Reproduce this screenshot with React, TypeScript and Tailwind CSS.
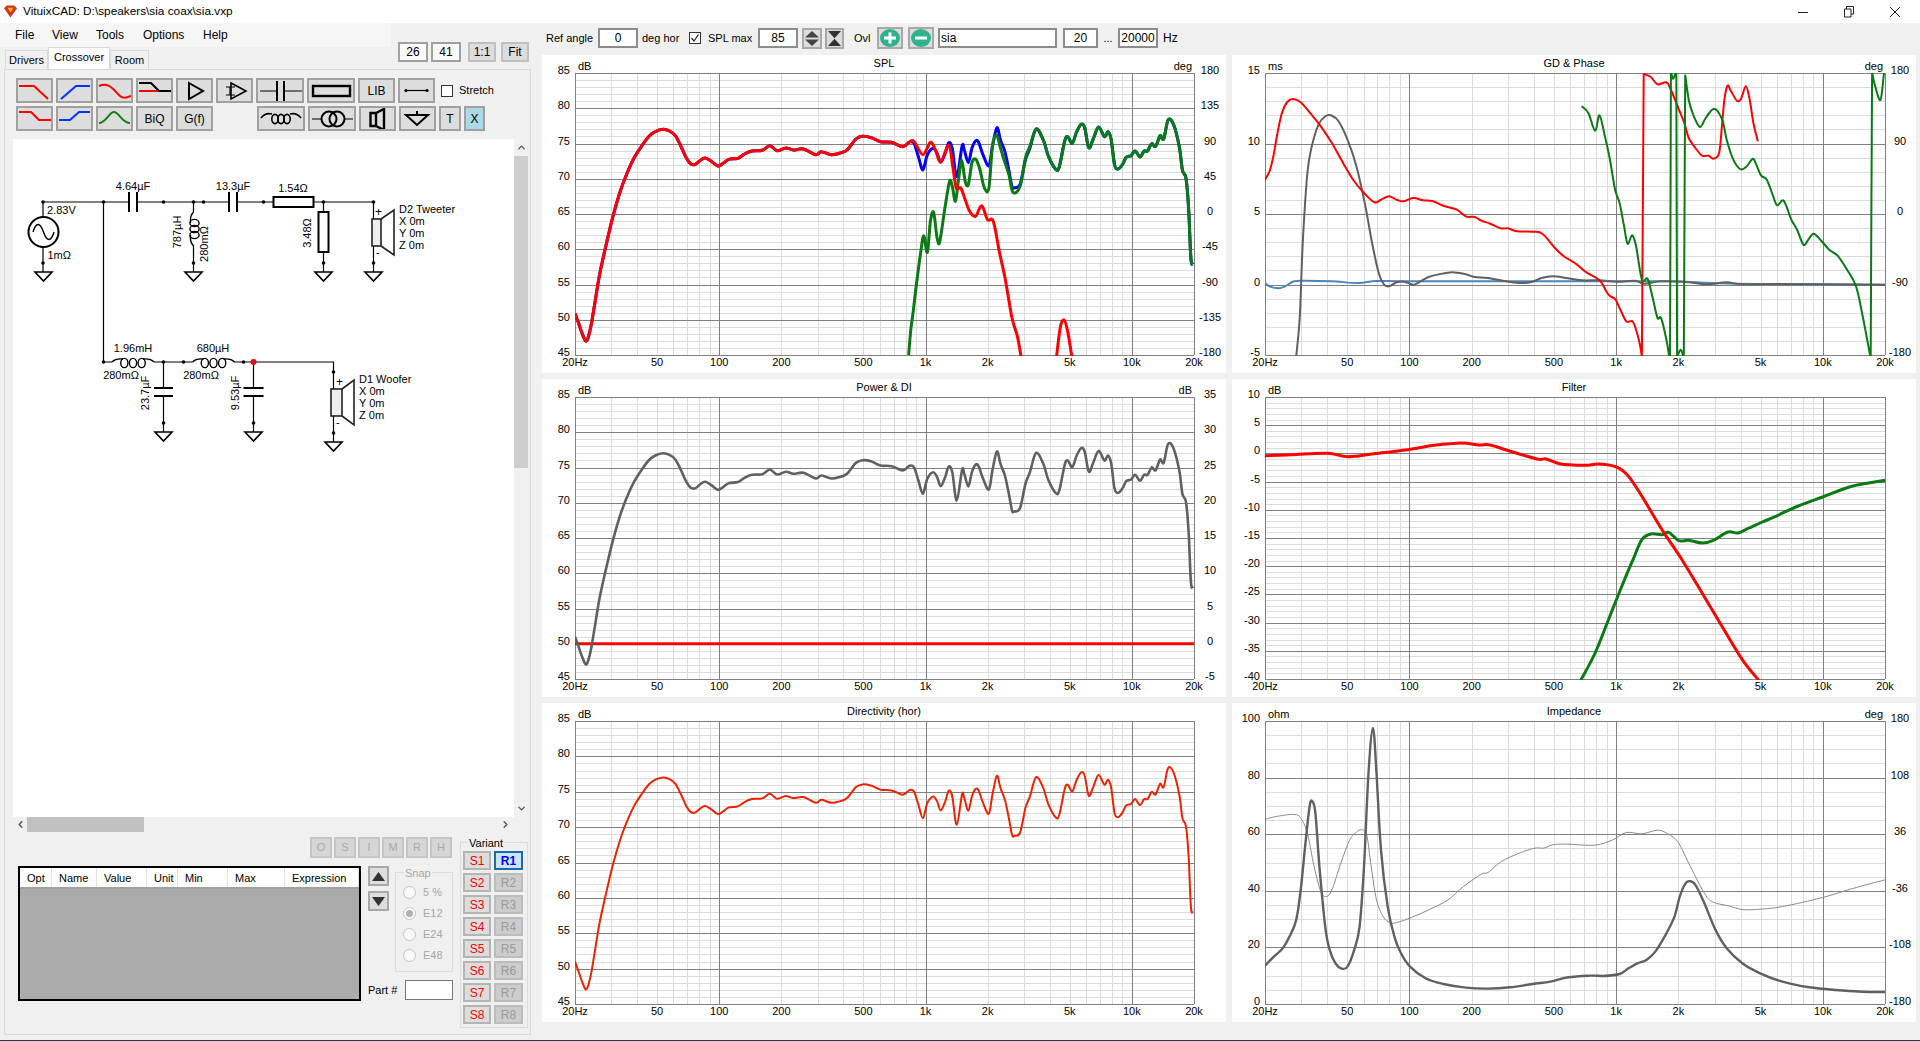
import { Fragment } from "react";
import type { ReactNode } from "react";
import { ChevronDown, ChevronLeft, ChevronRight, ChevronUp } from "lucide-react";

type Pt = number[];

const p = (s: string): Pt[] =>
  s
    .trim()
    .split(/\s+/)
    .map((v) => v.split(",").map(Number));

// curve points are read off the reference, in crop coordinates
const RESPONSE = p(`100,785 108,815 116,845 124,868 130,855 137,815 145,750 155,670 168,590 185,495 200,425 215,370 232,320 250,282 265,255 280,240 297,233 312,238 325,252 338,285 350,320 360,337 370,338 382,325 392,319 405,328 420,343 432,335 445,323 465,320 480,307 497,298 520,296 537,282 553,297 573,289 590,295 612,292 640,309 652,300 675,309 695,304 710,295 730,262 745,254 765,258 785,270 810,272 835,285 850,271 860,275 870,315 880,355 890,310 903,290 912,305 920,332 930,305 938,273 946,290 956,375 968,283 973,295 982,333 990,290 998,268 1005,272 1015,310 1028,342 1036,285 1046,228 1054,265 1064,300 1072,350 1080,405 1085,408 1098,398 1110,325 1120,290 1134,232 1150,265 1162,315 1178,353 1186,345 1198,268 1205,255 1215,275 1225,240 1235,218 1243,228 1252,288 1262,262 1274,226 1287,255 1295,240 1302,262 1310,340 1318,352 1328,338 1336,317 1347,312 1356,298 1367,316 1376,298 1384,298 1393,276 1402,284 1412,252 1420,262 1430,205 1442,218 1455,285 1462,355 1470,380 1476,470 1481,620 1486,638`);

const RESP_BOX = [100, 64, 1488, 912];
const shift = (pts: Pt[], dy: number) => pts.map(([x, y]) => [x, y + dy]);

const SPL_TOTAL = shift(RESPONSE, 156);
const SPL_GREEN = [
  ...p(`848,1066 853,990 858,940 866,850 875,760 882,708 890,758 897,665 904,638 912,715 918,725 930,620 940,545 946,560 953,605 960,540 967,482 975,545 982,555 990,490 998,478 1007,505 1018,565 1028,565 1036,440 1045,405 1053,440 1062,480 1073,525 1082,578 1098,560 1110,475 1120,440`),
  ...SPL_TOTAL.filter(([x]) => x >= 1134),
];
const SPL_RED = [
  ...SPL_TOTAL.filter(([x]) => x <= 850),
  ...p(`860,425 880,465 897,428 908,450 920,487 938,437 947,500 955,565 965,565 975,600 985,635 998,650 1012,618 1025,660 1038,665 1052,760 1065,840 1080,955 1092,1010 1100,1070`),
];
const SPL_RED_2 = p(`1180,1070 1188,985 1196,960 1204,990 1214,1070`);

const GD_RED = p(`100,540 110,515 118,475 128,400 138,340 150,307 163,298 180,308 200,338 225,380 250,430 275,490 300,545 322,580 345,608 360,600 378,590 395,600 410,605 432,595 455,602 475,604 500,618 530,630 550,650 570,652 585,663 605,672 628,686 645,686 665,695 700,696 722,702 750,745 770,770 795,790 820,818 850,842 870,885 885,898 895,925 910,965 925,967 938,1020 945,1070`);
const GD_RED_2 = p(`949,222 965,232 980,254 1000,248 1010,270 1025,320 1040,370 1050,415 1065,445 1080,468 1095,468 1105,477 1118,460 1125,370 1130,300 1137,258 1145,275 1158,303 1167,298 1178,260 1186,295 1195,370 1205,425`);
const GD_GRAY = p(`170,1070 178,950 185,720 195,520 205,440 220,375 235,350 248,347 265,365 285,420 305,500 325,620 340,730 355,820 367,855 378,860 395,848 412,846 432,855 445,848 465,833 490,824 520,818 550,824 570,832 600,835 640,845 670,850 695,848 720,835 745,830 775,835 810,842 850,842 890,846 930,843 950,852 985,845 1040,846 1090,854 1135,848 1170,854 1250,853 1490,855`);
const GD_BLUE = p(`100,850 110,860 130,866 145,860 165,845 190,843 250,845 310,850 350,844 420,845 600,845 800,845 1000,845 1100,850 1200,853 1490,855`);
const GD_GREEN = [
  p(`810,320 825,340 840,393 850,347 862,410 872,470 885,570 895,610 905,680 913,732 923,707 932,740 945,840 958,838 970,900 980,955 988,955 1000,1020 1006,1070`),
  p(`1008,1070 1010,215`),
  p(`1010,215 1015,238 1021,215`),
  p(`1022,215 1024,1070`),
  p(`1026,1066 1032,1050 1038,1070`),
  p(`1039,1070 1042,225`),
  p(`1042,225 1050,300 1060,345 1075,382 1088,355 1107,327 1125,360 1135,420 1150,480 1165,508 1178,503 1193,478 1200,490 1212,527 1225,540 1238,585 1248,617 1263,603 1280,660 1293,690 1307,735 1318,720 1330,702 1345,720 1365,750 1385,770 1405,810 1425,860 1440,950 1457,1070`),
  p(`1458,1070 1461,215`),
  p(`1461,220 1468,260 1480,300 1488,215`),
];

const FILTER_RED = p(`100,258 160,255 240,251 285,261 340,253 420,240 480,227 540,220 580,226 605,226 650,245 710,268 730,268 760,282 790,286 820,287 850,283 890,293 915,320 945,380 990,480 1030,560 1080,670 1120,760 1170,870 1207,932`);
const FILTER_GREEN = p(`808,932 840,850 870,750 900,650 925,570 945,510 965,493 990,495 1005,488 1028,513 1050,512 1080,520 1105,512 1138,487 1160,490 1185,475 1215,457 1250,437 1290,412 1350,382 1410,352 1450,341 1490,332`);

const IMP_DARK = p(`100,797 120,770 140,745 155,710 170,660 180,570 190,440 200,320 206,305 213,340 222,500 235,680 245,750 258,790 272,806 285,800 300,750 312,680 322,500 332,220 342,85 350,220 360,450 375,620 390,710 405,760 425,800 460,835 500,852 550,863 600,866 650,862 700,852 740,845 780,832 830,827 860,828 895,822 915,805 935,790 955,780 975,755 1000,700 1018,650 1030,590 1042,552 1053,544 1065,555 1085,610 1110,690 1135,745 1170,790 1210,820 1260,845 1320,862 1380,870 1440,875 1490,876`);
const IMP_THIN = p(`100,358 130,349 165,344 180,355 195,400 210,500 225,575 237,590 250,570 270,490 290,420 305,397 316,390 328,405 338,500 350,600 365,650 380,668 395,668 430,652 470,628 510,600 545,560 585,523 600,518 630,485 670,460 705,445 725,445 745,435 775,433 840,436 880,420 910,398 945,402 980,391 1000,400 1025,425 1050,490 1085,580 1105,607 1140,618 1170,629 1210,628 1260,620 1350,593 1420,565 1490,540`);

const FREQS = [
  20, 30, 40, 50, 60, 70, 80, 90, 100, 200, 300, 400, 500, 600, 700, 800, 900, 1000, 2000, 3000,
  4000, 5000, 6000, 7000, 8000, 9000, 10000, 20000,
];
const FREQ_LABELS: [number, string][] = [
  [20, "20Hz"],
  [50, "50"],
  [100, "100"],
  [200, "200"],
  [500, "500"],
  [1000, "1k"],
  [2000, "2k"],
  [5000, "5k"],
  [10000, "10k"],
  [20000, "20k"],
];

function smooth(pts: Pt[]) {
  let d = `M${pts[0][0].toFixed(1)} ${pts[0][1].toFixed(1)}`;
  for (let i = 0; i < pts.length - 1; i++) {
    const a = pts[Math.max(i - 1, 0)];
    const b = pts[i];
    const c = pts[i + 1];
    const e = pts[Math.min(i + 2, pts.length - 1)];
    const c1 = [b[0] + (c[0] - a[0]) / 6, b[1] + (c[1] - a[1]) / 6];
    const c2 = [c[0] - (e[0] - b[0]) / 6, c[1] - (e[1] - b[1]) / 6];
    d += `C${c1[0].toFixed(1)} ${c1[1].toFixed(1)} ${c2[0].toFixed(1)} ${c2[1].toFixed(1)} ${c[0].toFixed(1)} ${c[1].toFixed(1)}`;
  }
  return d;
}

type Curve = { segs: Pt[][]; color: string; w: number; box: number[] };

type ChartProps = {
  title: string;
  left: string[];
  right?: string[];
  unitL: string;
  unitR?: string;
  minor: number;
  x1: number;
  y0?: number;
  y1?: number;
  h?: number;
  curves: Curve[];
  rightX?: number;
};

function Chart({ title, left, right, unitL, unitR, minor, x1, y0 = 18, y1 = 300, h = 318, curves, rightX = 668 }: ChartProps) {
  const x0 = 33;
  const id = "clip" + title.replace(/[^a-zA-Z]/g, "");
  const fx = (f: number) => x0 + ((x1 - x0) * Math.log10(f / 20)) / 3;
  const divs = left.length - 1;
  const fy = (i: number) => y0 + ((y1 - y0) * i) / divs;
  const minors: number[] = [];
  for (let i = 0; i < divs; i++) for (let j = 1; j < minor; j++) minors.push(fy(i + j / minor));
  const crisp = (v: number) => Math.round(v) + 0.5;
  return (
    <div className="bg-white">
      <svg width={684} height={h} viewBox={`0 0 684 ${h}`} className="block text-[11px]">
        <defs>
          <clipPath id={id}>
            <rect x={x0} y={y0} width={x1 - x0 + 1} height={y1 - y0 + 1} />
          </clipPath>
        </defs>
        <g shapeRendering="crispEdges" strokeWidth={1}>
          {minors.map((y) => (
            <line key={y} x1={x0} x2={x1} y1={crisp(y)} y2={crisp(y)} stroke="#dcdcdc" />
          ))}
          {FREQS.map((f) => (
            <line key={f} x1={crisp(fx(f))} x2={crisp(fx(f))} y1={y0} y2={y1} stroke="#dcdcdc" />
          ))}
          {left.map((_, i) => (
            <line key={i} x1={x0} x2={x1} y1={crisp(fy(i))} y2={crisp(fy(i))} stroke="#808080" />
          ))}
          {[20, 100, 1000, 10000, 20000].map((f) => (
            <line key={f} x1={crisp(fx(f))} x2={crisp(fx(f))} y1={y0} y2={y1} stroke="#808080" />
          ))}
        </g>
        <g clipPath={`url(#${id})`} fill="none" strokeLinejoin="round">
          {curves.map((c, i) => {
            const sx = (x1 - x0) / (c.box[2] - c.box[0]);
            const sy = (y1 - y0) / (c.box[3] - c.box[1]);
            const d = c.segs
              .map((s) => smooth(s.map(([x, y]) => [x0 + (x - c.box[0]) * sx, y0 + (y - c.box[1]) * sy])))
              .join("");
            return <path key={i} d={d} stroke={c.color} strokeWidth={c.w} />;
          })}
        </g>
        <text x={342} y={11.5} textAnchor="middle">
          {title}
        </text>
        <text x={36} y={15}>
          {unitL}
        </text>
        {unitR && (
          <text x={x1 - 2} y={15} textAnchor="end">
            {unitR}
          </text>
        )}
        {left.map((t, i) => (
          <text key={i} x={28} y={fy(i) + 1} textAnchor="end">
            {t}
          </text>
        ))}
        {right?.map((t, i) => (
          <text key={i} x={rightX} y={fy(i) + 1} textAnchor="middle">
            {t}
          </text>
        ))}
        {FREQ_LABELS.map(([f, t]) => (
          <text key={f} x={fx(f)} y={y1 + 11} textAnchor="middle">
            {t}
          </text>
        ))}
      </svg>
    </div>
  );
}

function ToolBtn({ w = "w-[37px]", children, blue }: { w?: string; children: ReactNode; blue?: boolean }) {
  return (
    <div
      className={`${w} flex h-[25px] items-center justify-center border-2 border-[#a0a0a0] text-[12px] ${
        blue ? "bg-[#add8e6]" : "bg-[#dddddd]"
      }`}
    >
      {children}
    </div>
  );
}

function BtnIcon({ w = 37, children }: { w?: number; children: ReactNode }) {
  return (
    <svg width={w - 4} height={21} viewBox={`2 2 ${w - 4} 21`} fill="none" stroke="black" strokeWidth={2}>
      {children}
    </svg>
  );
}

function Coil({ x, y, len, vertical }: { x: number; y: number; len: number; vertical?: boolean }) {
  const step = (len - 16) / 3;
  const tr = vertical ? `translate(${x} ${y}) rotate(90)` : `translate(${x} ${y})`;
  const flip = vertical ? 1 : -1;
  return (
    <g transform={tr} fill="none" stroke="black" strokeWidth={1.4}>
      <path d={`M0 0C3 ${flip * 3} 6 ${flip * 3.5} 11 ${flip * 3}`} />
      <path d={`M${len} 0C${len - 3} ${flip * 3} ${len - 6} ${flip * 3.5} ${len - 11} ${flip * 3}`} />
      {[0, 1, 2].map((i) => (
        <ellipse key={i} cx={8 + step * (i + 0.5)} cy={-flip * 1} rx={3.6} ry={4.6} />
      ))}
    </g>
  );
}

function Ground({ x, y }: { x: number; y: number }) {
  return <path d={`M${x - 8.5} ${y}H${x + 8.5}L${x} ${y + 9}Z`} fill="none" stroke="black" strokeWidth={1.6} />;
}

function Speaker({ x, y, w, h, cone, coneTop }: { x: number; y: number; w: number; h: number; cone: number; coneTop: number }) {
  return (
    <g fill="none" stroke="#222" strokeWidth={1.6}>
      <rect x={x} y={y} width={w} height={h} fill="#efefef" />
      <path d={`M${x + w} ${y}L${x + w + cone} ${y - coneTop}V${y + h + coneTop}L${x + w} ${y + h}`} />
    </g>
  );
}

function VText({ x, y, children }: { x: number; y: number; children: ReactNode }) {
  return (
    <text transform={`translate(${x} ${y}) rotate(-90)`} textAnchor="middle" dominantBaseline="middle">
      {children}
    </text>
  );
}

function Schematic() {
  const dots = [
    [43, 202],
    [103.5, 202],
    [163.5, 202],
    [193.5, 202],
    [203.5, 202],
    [263.5, 202],
    [323.5, 202],
    [373.5, 202],
    [43, 263],
    [193.5, 263],
    [323.5, 263],
    [373.5, 263],
    [103.5, 362],
    [163.5, 362],
    [183.5, 362],
    [243.5, 362],
    [163.5, 423],
    [253.5, 423],
    [333.5, 372],
    [333.5, 433],
  ];
  return (
    <svg width={500} height={678} viewBox="13 139 500 678" className="block text-[11px]">
      <g stroke="black" strokeWidth={1.2} fill="none">
        <path d="M43 202H129M137 202H229M237 202H273M313 202H373.5V219M43 202V217M43 247V272M103.5 202V362H112M154 362H192.5M234 362H333.5V389M193.5 202V212M193.5 245V272M323.5 202V212M323.5 252V272M373.5 246V272M333.5 416V442M163.5 362V388M163.5 396V432M253.5 362V388M253.5 396V432" />
      </g>
      <g stroke="black" strokeWidth={2} fill="none">
        <path d="M129 192V212M137 192V212M229 192V212M237 192V212M154 388H173M154 396H173M243.5 388H263.5M243.5 396H263.5" />
        <rect x={273.5} y={197} width={40} height={10} />
        <rect x={318.5} y={212} width={10} height={40} />
        <circle cx={43.5} cy={232} r={15} />
        <path d="M33 232C36 222 40 222 43.5 232S51 242 54 232" strokeWidth={1.4} />
      </g>
      <Coil x={112} y={362} len={42} />
      <Coil x={192.5} y={362} len={42} />
      <Coil x={193.5} y={212} len={34} vertical />
      <Ground x={43.5} y={272} />
      <Ground x={193.5} y={272} />
      <Ground x={323.5} y={272} />
      <Ground x={373.5} y={272} />
      <Ground x={163.5} y={432} />
      <Ground x={253.5} y={432} />
      <Ground x={333.5} y={442} />
      <Speaker x={372} y={219} w={9} h={27} cone={13} coneTop={9} />
      <Speaker x={331} y={389} w={11} h={27} cone={12} coneTop={9} />
      {dots.map(([x, y]) => (
        <circle key={`${x}-${y}`} cx={x} cy={y} r={1.8} fill="black" />
      ))}
      <circle cx={253.5} cy={362} r={3} fill="#e01010" />
      <text x={47} y={214}>2.83V</text>
      <text x={47.5} y={259}>1mΩ</text>
      <text x={133} y={190} textAnchor="middle">4.64µF</text>
      <text x={233} y={190} textAnchor="middle">13.3µF</text>
      <text x={293} y={192} textAnchor="middle">1.54Ω</text>
      <text x={133} y={352} textAnchor="middle">1.96mH</text>
      <text x={121} y={379} textAnchor="middle">280mΩ</text>
      <text x={213} y={352} textAnchor="middle">680µH</text>
      <text x={201} y={379} textAnchor="middle">280mΩ</text>
      <VText x={178} y={232}>787µH</VText>
      <VText x={205} y={244}>280mΩ</VText>
      <VText x={308} y={233}>3.48Ω</VText>
      <VText x={146} y={393}>23.7µF</VText>
      <VText x={236} y={393}>9.53µF</VText>
      <text x={375} y={216} className="text-[12px]">+</text>
      <text x={376} y={256}>-</text>
      <text x={336} y={386} className="text-[12px]">+</text>
      <text x={336} y={426}>-</text>
      <text x={399} y={213}>D2 Tweeter</text>
      <text x={399} y={225}>X 0m</text>
      <text x={399} y={237}>Y 0m</text>
      <text x={399} y={249}>Z 0m</text>
      <text x={359} y={383}>D1 Woofer</text>
      <text x={359} y={395}>X 0m</text>
      <text x={359} y={407}>Y 0m</text>
      <text x={359} y={419}>Z 0m</text>
    </svg>
  );
}

function Field({ w, children, left }: { w: string; children?: ReactNode; left?: boolean }) {
  return (
    <div
      className={`${w} flex h-[20px] items-center border-2 border-[#8c8c8c] bg-white text-[12px] ${
        left ? "pl-[1px] text-[11px]" : "justify-center"
      }`}
    >
      {children}
    </div>
  );
}

function TopToolbar() {
  return (
    <div className="flex h-[32px] items-center pb-[2px] pl-[4px] text-[11px]">
      <span className="w-[52px]">Ref angle</span>
      <Field w="w-[40px]">0</Field>
      <span className="ml-[4px] w-[47px]">deg hor</span>
      <div className="flex h-[12px] w-[12px] items-center justify-center border border-[#333] bg-white">
        <svg width={10} height={10} viewBox="0 0 10 10" fill="none" stroke="#222" strokeWidth={1.2}>
          <path d="M1.5 5L4 8L8.5 1.5" />
        </svg>
      </div>
      <span className="ml-[7px] w-[50px]">SPL max</span>
      <Field w="w-[40px]">85</Field>
      <div className="ml-[4px] flex h-[21px] w-[20px] items-center justify-center border-2 border-[#a8a8a8] bg-[#dddddd]">
        <svg width={14} height={15} viewBox="0 0 14 15" fill="#444">
          <path d="M7 0L14 6.5H0ZM0 8.5H14L7 15Z" />
        </svg>
      </div>
      <div className="ml-[3px] flex h-[21px] w-[19px] items-center justify-center border-2 border-[#a8a8a8] bg-[#dddddd]">
        <svg width={13} height={15} viewBox="0 0 13 15" fill="#333">
          <path d="M0 0H13L6.5 7.2ZM6.5 7.8L13 15H0Z" />
        </svg>
      </div>
      <span className="ml-[10px] w-[23px]">Ovl</span>
      <div className="flex h-[22px] w-[26px] items-center justify-center border-2 border-[#a8a8a8] bg-[#dddddd]">
        <svg width={20} height={18} viewBox="0 0 20 18">
          <ellipse cx={10} cy={9} rx={10} ry={9} fill="#2fb28e" />
          <path d="M4 9H16M10 3.5V14.5" stroke="white" strokeWidth={3} />
        </svg>
      </div>
      <div className="ml-[5px] flex h-[22px] w-[26px] items-center justify-center border-2 border-[#a8a8a8] bg-[#dddddd]">
        <svg width={20} height={18} viewBox="0 0 20 18">
          <ellipse cx={10} cy={9} rx={10} ry={9} fill="#2fb28e" />
          <path d="M4 9H16" stroke="white" strokeWidth={3} />
        </svg>
      </div>
      <div className="ml-[4px]">
        <Field w="w-[119px]" left>
          sia
        </Field>
      </div>
      <div className="ml-[6px]">
        <Field w="w-[35px]">20</Field>
      </div>
      <span className="w-[20px] text-center">...</span>
      <Field w="w-[40px]">20000</Field>
      <span className="ml-[5px] text-[12px]">Hz</span>
    </div>
  );
}

function CrossoverTools() {
  return (
    <div className="flex flex-col gap-[3px] pl-[11px] pt-[8px]">
      <div className="flex items-center gap-[3px]">
        <ToolBtn>
          <BtnIcon>
            <path d="M3 8H18L32 21" stroke="#ff0000" />
          </BtnIcon>
        </ToolBtn>
        <ToolBtn>
          <BtnIcon>
            <path d="M5 21L20 8H34" stroke="#0033ff" />
          </BtnIcon>
        </ToolBtn>
        <ToolBtn>
          <BtnIcon>
            <path d="M3 8C12 4 16 10 22 16C26 21 30 20 35 18" stroke="#ff0000" />
          </BtnIcon>
        </ToolBtn>
        <ToolBtn>
          <BtnIcon>
            <path d="M3 5H15L23 13H35" />
            <path d="M3 13H22" stroke="#ff0000" />
          </BtnIcon>
        </ToolBtn>
        <ToolBtn>
          <BtnIcon>
            <path d="M13 5L27 13L13 21Z" />
          </BtnIcon>
        </ToolBtn>
        <ToolBtn>
          <BtnIcon>
            <path d="M15 5L30 13L15 21Z" strokeWidth={1.6} />
            <path d="M10 9H19M10 17H19M14 9V17" strokeWidth={1.2} />
          </BtnIcon>
        </ToolBtn>
        <ToolBtn w="w-[48px]">
          <BtnIcon w={48}>
            <path d="M4 13H21M28 13H46" strokeWidth={1.2} />
            <path d="M21 3V23M28 3V23" />
          </BtnIcon>
        </ToolBtn>
        <ToolBtn w="w-[48px]">
          <BtnIcon w={48}>
            <rect x={6} y={8} width={37} height={10} strokeWidth={2.4} />
          </BtnIcon>
        </ToolBtn>
        <ToolBtn>LIB</ToolBtn>
        <ToolBtn>
          <BtnIcon>
            <path d="M8 12.5H29" strokeWidth={1.2} />
            <circle cx={8} cy={12.5} r={1.6} fill="black" stroke="none" />
            <circle cx={29} cy={12.5} r={1.6} fill="black" stroke="none" />
          </BtnIcon>
        </ToolBtn>
        <div className="ml-[3px] h-[12px] w-[12px] border border-[#333] bg-white" />
        <span className="ml-[3px] text-[11px]">Stretch</span>
      </div>
      <div className="flex items-center gap-[3px]">
        <ToolBtn>
          <BtnIcon>
            <path d="M3 6H15L23 14H35" stroke="#ff0000" />
          </BtnIcon>
        </ToolBtn>
        <ToolBtn>
          <BtnIcon>
            <path d="M3 14H14L23 6H34" stroke="#0033ff" />
          </BtnIcon>
        </ToolBtn>
        <ToolBtn>
          <BtnIcon>
            <path d="M3 17C10 17 13 6 18 6C23 6 26 17 34 17" stroke="#118011" />
          </BtnIcon>
        </ToolBtn>
        <ToolBtn>BiQ</ToolBtn>
        <ToolBtn>G(f)</ToolBtn>
        <div className="w-[38px]" />
        <ToolBtn w="w-[48px]">
          <BtnIcon w={48}>
            <path d="M4 12C7 8 11 7 15 8M44 12C41 8 37 7 33 8" strokeWidth={1.6} />
            <ellipse cx={18} cy={13} rx={3.2} ry={4.6} strokeWidth={1.6} />
            <ellipse cx={24} cy={13} rx={3.2} ry={4.6} strokeWidth={1.6} />
            <ellipse cx={30} cy={13} rx={3.2} ry={4.6} strokeWidth={1.6} />
          </BtnIcon>
        </ToolBtn>
        <ToolBtn w="w-[48px]">
          <BtnIcon w={48}>
            <path d="M4 13H14M37 13H45" strokeWidth={1.2} />
            <circle cx={21} cy={13} r={7.5} />
            <circle cx={29} cy={13} r={7.5} />
          </BtnIcon>
        </ToolBtn>
        <ToolBtn>
          <BtnIcon>
            <path d="M11.5 7H17V20H11.5ZM17 7L25 3V24L17 20" strokeWidth={2.4} />
          </BtnIcon>
        </ToolBtn>
        <ToolBtn>
          <BtnIcon>
            <path d="M18 5V9M7 9H29L18 19Z" strokeWidth={2} />
          </BtnIcon>
        </ToolBtn>
        <ToolBtn w="w-[22px]">T</ToolBtn>
        <ToolBtn w="w-[21px]" blue>
          X
        </ToolBtn>
      </div>
    </div>
  );
}

function CanvasArea() {
  return (
    <div className="ml-[8px] mt-[8px] w-[515px]">
      <div className="flex">
        <div className="h-[678px] w-[501px] bg-white">
          <Schematic />
        </div>
        <div className="flex w-[14px] flex-col items-center">
          <div className="flex h-[17px] w-full items-center justify-center">
            <ChevronUp size={11} strokeWidth={3} color="#555" />
          </div>
          <div className="h-[312px] w-full bg-[#cdcdcd]" />
          <div className="flex-1" />
          <div className="flex h-[17px] w-full items-center justify-center">
            <ChevronDown size={11} strokeWidth={3} color="#555" />
          </div>
        </div>
      </div>
      <div className="flex h-[15px] w-[501px] items-center">
        <div className="flex h-full w-[14px] items-center justify-center">
          <ChevronLeft size={11} strokeWidth={3} color="#555" />
        </div>
        <div className="h-full w-[117px] bg-[#c0c0c0]" />
        <div className="flex-1" />
        <div className="flex h-full w-[17px] items-center justify-center">
          <ChevronRight size={11} strokeWidth={3} color="#555" />
        </div>
      </div>
    </div>
  );
}

const COLS: [string, string][] = [
  ["Opt", "w-[32px]"],
  ["Name", "w-[45px]"],
  ["Value", "w-[50px]"],
  ["Unit", "w-[31px]"],
  ["Min", "w-[50px]"],
  ["Max", "w-[57px]"],
  ["Expression", "w-[74px]"],
];

function Radio({ label, on }: { label: string; on?: boolean }) {
  return (
    <div className="flex h-[13px] items-center gap-[7px] text-[11px] text-[#a6a6a6]">
      <div className="flex h-[13px] w-[13px] items-center justify-center rounded-full border border-[#c4c4c4] bg-[#f8f8f8]">
        {on && <div className="h-[7px] w-[7px] rounded-full bg-[#b0b0b0]" />}
      </div>
      {label}
    </div>
  );
}

function BottomPanel() {
  return (
    <div className="flex pl-[13px]">
      <div className="w-[434px] pt-[5px]">
        <div className="flex justify-end gap-[2px]">
          {["O", "S", "I", "M", "R", "H"].map((t) => (
            <div
              key={t}
              className="flex h-[21px] w-[22px] items-center justify-center border-2 border-[#c4c4c4] bg-[#d6d6d6] text-[11px] text-[#a8a8a8]"
            >
              {t}
            </div>
          ))}
        </div>
        <div className="mt-[8px] flex">
          <div className="h-[135px] w-[343px] border-2 border-black bg-[#ababab]">
            <div className="flex h-[21px] border-b-2 border-[#a0a0a0] bg-white text-[11px]">
              {COLS.map(([t, w]) => (
                <div key={t} className={`${w} flex items-center border-r border-[#e2e2e2] pl-[7px] pt-[2px]`}>
                  {t}
                </div>
              ))}
            </div>
          </div>
          <div className="ml-[7px] flex w-[85px] flex-col">
            <div className="flex">
              <div className="flex w-[21px] flex-col gap-[5px]">
                <div className="flex h-[20px] items-center justify-center border-2 border-[#a8a8a8] bg-[#dddddd]">
                  <svg width={13} height={9} viewBox="0 0 13 9" fill="#333">
                    <path d="M6.5 0L13 9H0Z" />
                  </svg>
                </div>
                <div className="flex h-[20px] items-center justify-center border-2 border-[#a8a8a8] bg-[#dddddd]">
                  <svg width={13} height={9} viewBox="0 0 13 9" fill="#333">
                    <path d="M0 0H13L6.5 9Z" />
                  </svg>
                </div>
              </div>
              <div className="relative ml-[6px] mt-[6px] flex h-[100px] w-[58px] flex-col gap-[8px] border border-[#dcdcdc] pl-[7px] pt-[13px]">
                <span className="absolute -top-[5px] left-[8px] bg-[#f0f0f0] px-[1px] text-[11px] leading-none text-[#a6a6a6]">
                  Snap
                </span>
                <Radio label="5 %" />
                <Radio label="E12" on />
                <Radio label="E24" />
                <Radio label="E48" />
              </div>
            </div>
            <div className="mt-[8px] flex items-center justify-between text-[11px]">
              Part #
              <div className="h-[20px] w-[48px] border border-[#777] bg-white" />
            </div>
          </div>
        </div>
      </div>
      <div className="relative ml-[8px] mt-[10px] grid h-[186px] w-[68px] grid-cols-[28px_29px] content-start gap-x-[3px] gap-y-[3px] border border-[#dcdcdc] pl-[2px] pt-[8px] text-[12px]">
        <span className="absolute -top-[5px] left-[7px] bg-[#f0f0f0] px-[1px] text-[11px] leading-none">Variant</span>
        {[1, 2, 3, 4, 5, 6, 7, 8].map((n) => (
          <Fragment key={n}>
            <div className="flex h-[19px] items-center justify-center border-2 border-[#b4b4b4] bg-[#dddddd] text-[#ff0000]">
              S{n}
            </div>
            <div
              className={
                n === 1
                  ? "flex h-[19px] items-center justify-center border-2 border-[#1a6ab0] bg-[#cce4f7] font-bold text-[#0000ff]"
                  : "flex h-[19px] items-center justify-center border-2 border-[#bcbcbc] bg-[#cccccc] text-[#9a9a9a]"
              }
            >
              R{n}
            </div>
          </Fragment>
        ))}
      </div>
    </div>
  );
}

function LeftPanel() {
  return (
    <div className="w-[542px] shrink-0 pl-[4px] pr-[11px]">
      <div className="-ml-[4px] flex h-[46px] justify-between">
        <div className="flex flex-col">
          <div className="flex h-[24px] w-[391px] items-center bg-[#f6f6f6] pl-[15px] text-[12px]">
            <span className="w-[37px]">File</span>
            <span className="w-[44px]">View</span>
            <span className="w-[47px]">Tools</span>
            <span className="w-[60px]">Options</span>
            <span>Help</span>
          </div>
          <div className="flex items-end pl-[5px] text-[11px]">
            <div className="flex h-[19px] w-[43px] items-center justify-center border border-b-0 border-[#d9d9d9] bg-[#f0f0f0]">
              Drivers
            </div>
            <div className="flex h-[22px] w-[62px] items-center justify-center border border-b-0 border-[#d9d9d9] bg-white pb-[2px]">
              Crossover
            </div>
            <div className="flex h-[19px] w-[39px] items-center justify-center border border-b-0 border-[#d9d9d9] bg-[#f0f0f0]">
              Room
            </div>
          </div>
        </div>
        <div className="flex items-start gap-[3px] pr-[2px] pt-[19px] text-[12px]">
          <div className="flex h-[20px] w-[30px] items-center justify-center border-2 border-[#a0a0a0] bg-[#fafafa]">26</div>
          <div className="flex h-[20px] w-[30px] items-center justify-center border-2 border-[#a0a0a0] bg-[#fafafa]">41</div>
          <div className="ml-[4px] flex h-[20px] w-[28px] items-center justify-center border-2 border-[#c0c0c0] bg-[#dddddd]">1:1</div>
          <div className="ml-[2px] flex h-[20px] w-[28px] items-center justify-center border-2 border-[#c0c0c0] bg-[#dddddd]">Fit</div>
        </div>
      </div>
      <div className="h-[966px] w-[527px] border border-[#d9d9d9]">
        <CrossoverTools />
        <CanvasArea />
        <BottomPanel />
      </div>
    </div>
  );
}

export default function App() {
  const db = ["85", "80", "75", "70", "65", "60", "55", "50", "45"];
  return (
    <div className="flex h-[1041px] w-[1920px] flex-col overflow-hidden bg-[#f0f0f0] font-['Liberation_Sans',sans-serif] text-black">
      <div className="flex h-[23px] shrink-0 items-center justify-between bg-white">
        <div className="flex items-center pl-[3px] text-[11.8px]">
          <svg width={15} height={13} viewBox="0 0 16 14">
            <path d="M1 3.5L4 0.5H12L15 3.5L8 13.5Z" fill="#d8321e" />
            <path d="M5 3H11L8 8Z" fill="#f5c518" />
          </svg>
          <span className="ml-[5px]">VituixCAD: D:\speakers\sia coax\sia.vxp</span>
        </div>
        <div className="flex pr-[2px]">
          <div className="flex w-[46px] justify-center">
            <svg width={12} height={12} viewBox="0 0 12 12" stroke="#222">
              <path d="M1 6.5H11" />
            </svg>
          </div>
          <div className="flex w-[46px] justify-center">
            <svg width={12} height={12} viewBox="0 0 12 12" fill="none" stroke="#222">
              <path d="M3.5 3V0.5H10.5V8H8M1.5 3H8V11H1.5Z" />
            </svg>
          </div>
          <div className="flex w-[46px] justify-center">
            <svg width={12} height={12} viewBox="0 0 12 12" stroke="#222">
              <path d="M1 1L11 11M11 1L1 11" />
            </svg>
          </div>
        </div>
      </div>
      <div className="flex flex-1 overflow-hidden">
        <LeftPanel />
        <div className="flex-1">
          <TopToolbar />
          <div className="grid grid-cols-[684px_684px] grid-rows-[318px_318px_319px] gap-[6px]">
            <Chart
              title="SPL"
              left={db}
              right={["180", "135", "90", "45", "0", "-45", "-90", "-135", "-180"]}
              unitL="dB"
              unitR="deg"
              minor={5}
              x1={652}
              curves={[
                { segs: [SPL_TOTAL], color: "#0000ff", w: 3, box: [100, 220, 1488, 1066] },
                { segs: [SPL_GREEN], color: "#0a7a14", w: 3, box: [100, 220, 1488, 1066] },
                { segs: [SPL_RED, SPL_RED_2], color: "#ff0000", w: 3, box: [100, 220, 1488, 1066] },
              ]}
            />
            <Chart
              title="GD & Phase"
              left={["15", "10", "5", "0", "-5"]}
              right={["180", "90", "0", "-90", "-180"]}
              unitL="ms"
              unitR="deg"
              minor={5}
              x1={653}
              curves={[
                { segs: [GD_BLUE], color: "#4a86c0", w: 2, box: [100, 220, 1490, 1066] },
                { segs: [GD_GRAY], color: "#606060", w: 2, box: [100, 220, 1490, 1066] },
                { segs: [GD_RED, p("945,1070 949,222"), GD_RED_2], color: "#ff0000", w: 2, box: [100, 220, 1490, 1066] },
                { segs: GD_GREEN, color: "#0a7a14", w: 2, box: [100, 220, 1490, 1066] },
              ]}
            />
            <Chart
              title="Power & DI"
              left={db}
              right={["35", "30", "25", "20", "15", "10", "5", "0", "-5"]}
              unitL="dB"
              unitR="dB"
              minor={5}
              x1={652}
              curves={[
                { segs: [p("100,822 1488,822")], color: "#ff0000", w: 3, box: [100, 82, 1488, 928] },
                { segs: [RESPONSE], color: "#606060", w: 2.6, box: RESP_BOX },
              ]}
            />
            <Chart
              title="Filter"
              left={["10", "5", "0", "-5", "-10", "-15", "-20", "-25", "-30", "-35", "-40"]}
              unitL="dB"
              minor={5}
              x1={653}
              curves={[
                { segs: [FILTER_GREEN], color: "#0a7a14", w: 3, box: [100, 82, 1490, 928] },
                { segs: [FILTER_RED], color: "#ff0000", w: 3, box: [100, 82, 1490, 928] },
              ]}
            />
            <Chart
              title="Directivity (hor)"
              left={db}
              unitL="dB"
              minor={5}
              x1={652}
              y1={301}
              h={319}
              curves={[{ segs: [RESPONSE], color: "#ee2200", w: 2, box: RESP_BOX }]}
            />
            <Chart
              title="Impedance"
              left={["100", "80", "60", "40", "20", "0"]}
              right={["180", "108", "36", "-36", "-108", "-180"]}
              unitL="ohm"
              unitR="deg"
              minor={4}
              x1={653}
              y1={301}
              h={319}
              curves={[
                { segs: [IMP_THIN], color: "#8a8a8a", w: 1, box: [100, 64, 1490, 912] },
                { segs: [IMP_DARK], color: "#606060", w: 2.4, box: [100, 64, 1490, 912] },
              ]}
            />
          </div>
        </div>
      </div>
      <div className="h-px shrink-0 bg-[#1e3a44]" />
    </div>
  );
}
